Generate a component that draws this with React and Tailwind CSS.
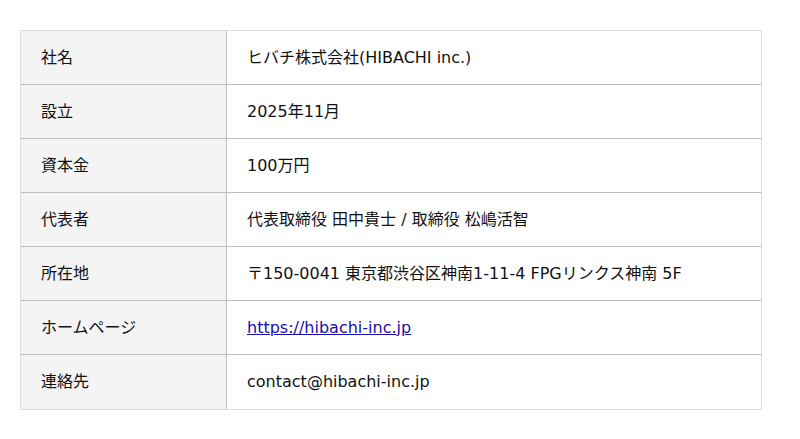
import React from "react";

const rows = [
  { label: "社名", value: "ヒバチ株式会社(HIBACHI inc.)" },
  { label: "設立", value: "2025年11月" },
  { label: "資本金", value: "100万円" },
  { label: "代表者", value: "代表取締役 田中貴士 / 取締役 松嶋活智" },
  { label: "所在地", value: "〒150-0041 東京都渋谷区神南1-11-4 FPGリンクス神南 5F" },
  { label: "ホームページ", value: "https://hibachi-inc.jp", link: true },
  { label: "連絡先", value: "contact@hibachi-inc.jp" },
];

const App = () => {
  return (
    <div
      className="min-h-screen bg-white pt-[30px] pl-[20px] text-[16px] text-[#111]"
      style={{ fontFamily: '"DejaVu Sans", "Noto Sans CJK JP", sans-serif' }}
    >
      <div className="w-[742px] border border-[#dcdcdc]">
        {rows.map((r, i) => (
          <div
            key={r.label}
            className={`flex h-[54px] ${i < rows.length - 1 ? "border-b border-[#bdbdbd]" : ""}`}
          >
            <div className="flex w-[206px] items-center border-r border-[#bdbdbd] bg-[#f4f4f4] pl-[20px]">
              {r.label}
            </div>
            <div className="flex flex-1 items-center pl-[20px]">
              {r.link ? (
                <a href="#" className="text-[#1a0dab] underline">
                  {r.value}
                </a>
              ) : (
                r.value
              )}
            </div>
          </div>
        ))}
      </div>
    </div>
  );
};

export default App;
